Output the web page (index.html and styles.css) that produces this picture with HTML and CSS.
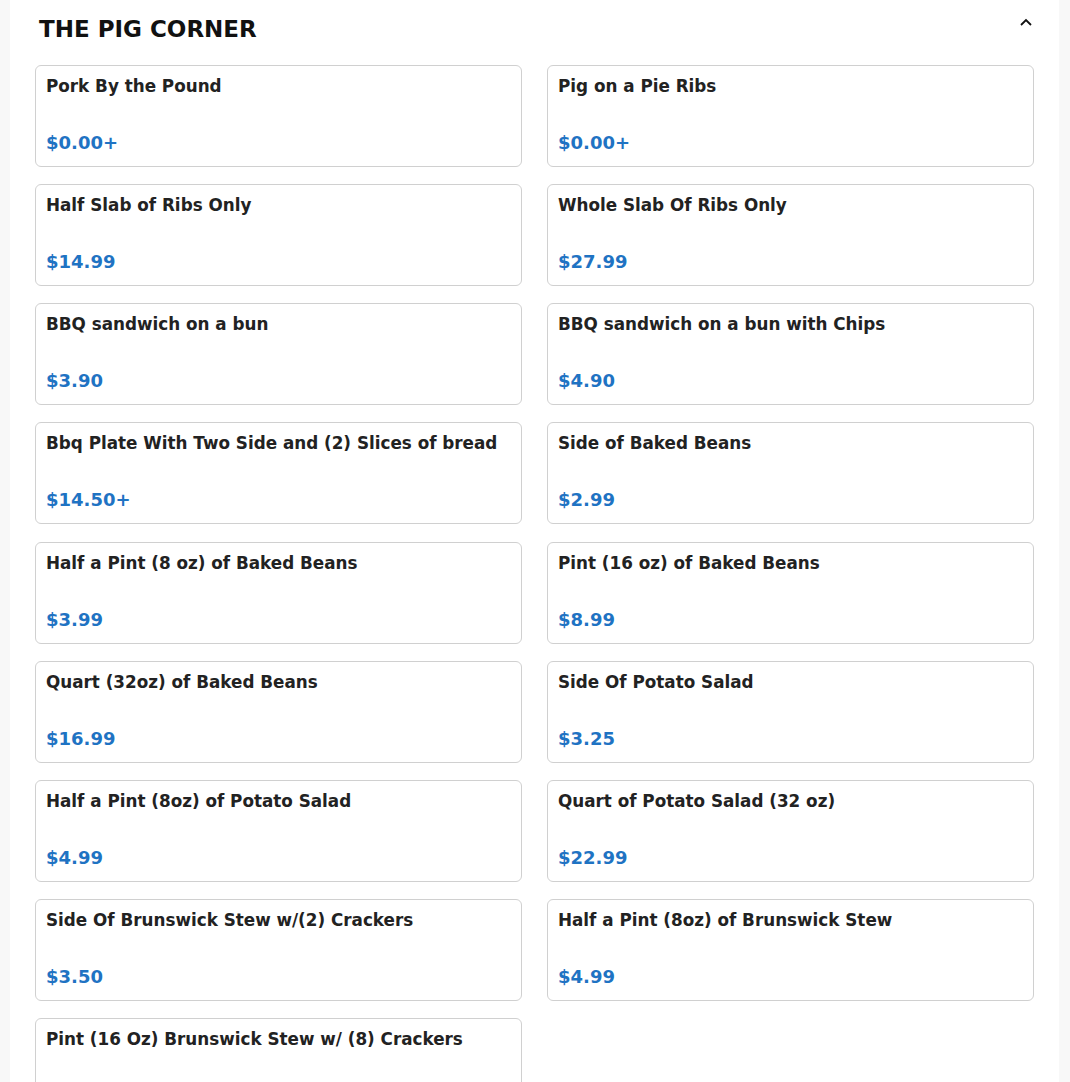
FILE: index.html
```html
<!DOCTYPE html>
<html>
<head>
<meta charset="utf-8">
<link rel="stylesheet" href="styles.css">
</head>
<body>
<div class="panel">
  <div class="header">
    <h2 class="title">THE PIG CORNER</h2>
    <svg class="chevron" width="14" height="10" viewBox="0 0 14 10"><path d="M2 8 L7 3 L12 8" fill="none" stroke="#111" stroke-width="1.8"/></svg>
  </div>
  <div class="grid">
    <div class="card"><div class="name">Pork By the Pound</div><div class="price">$0.00+</div></div>
    <div class="card"><div class="name">Pig on a Pie Ribs</div><div class="price">$0.00+</div></div>
    <div class="card"><div class="name">Half Slab of Ribs Only</div><div class="price">$14.99</div></div>
    <div class="card"><div class="name">Whole Slab Of Ribs Only</div><div class="price">$27.99</div></div>
    <div class="card"><div class="name">BBQ sandwich on a bun</div><div class="price">$3.90</div></div>
    <div class="card"><div class="name">BBQ sandwich on a bun with Chips</div><div class="price">$4.90</div></div>
    <div class="card"><div class="name">Bbq Plate With Two Side and (2) Slices of bread</div><div class="price">$14.50+</div></div>
    <div class="card"><div class="name">Side of Baked Beans</div><div class="price">$2.99</div></div>
    <div class="card"><div class="name">Half a Pint (8 oz) of Baked Beans</div><div class="price">$3.99</div></div>
    <div class="card"><div class="name">Pint (16 oz) of Baked Beans</div><div class="price">$8.99</div></div>
    <div class="card"><div class="name">Quart (32oz) of Baked Beans</div><div class="price">$16.99</div></div>
    <div class="card"><div class="name">Side Of Potato Salad</div><div class="price">$3.25</div></div>
    <div class="card"><div class="name">Half a Pint (8oz) of Potato Salad</div><div class="price">$4.99</div></div>
    <div class="card"><div class="name">Quart of Potato Salad (32 oz)</div><div class="price">$22.99</div></div>
    <div class="card"><div class="name">Side Of Brunswick Stew w/(2) Crackers</div><div class="price">$3.50</div></div>
    <div class="card"><div class="name">Half a Pint (8oz) of Brunswick Stew</div><div class="price">$4.99</div></div>
    <div class="card"><div class="name">Pint (16 Oz) Brunswick Stew w/ (8) Crackers</div><div class="price">$9.99</div></div>
  </div>
</div>
</body>
</html>
```
FILE: styles.css
```css
html, body {
  margin: 0;
  padding: 0;
  background: #f8f8f8;
  font-family: "DejaVu Sans", sans-serif;
}
.panel {
  margin: 0 11px 0 10px;
  background: #fff;
  padding: 0 25px 40px 25px;
  min-height: 1082px;
  box-sizing: border-box;
}
.header {
  display: flex;
  justify-content: space-between;
  align-items: flex-start;
  height: 65px;
}
.title {
  margin: 16px 0 0 4px;
  font-size: 23px;
  font-weight: bold;
  color: #111;
}
.chevron {
  margin-top: 17px;
  margin-right: 1px;
}
.grid {
  display: grid;
  grid-template-columns: 1fr 1fr;
  column-gap: 25px;
  row-gap: 17.15px;
}
.card {
  border: 1px solid #d0d0d0;
  border-radius: 6px;
  padding: 10px 10px 13px 10px;
  height: 102px;
  box-sizing: border-box;
  display: flex;
  flex-direction: column;
  justify-content: space-between;
}
.name {
  font-size: 16.8px;
  font-weight: bold;
  color: #222;
}
.price {
  font-size: 18px;
  font-weight: bold;
  color: #1f73c3;
}
```
